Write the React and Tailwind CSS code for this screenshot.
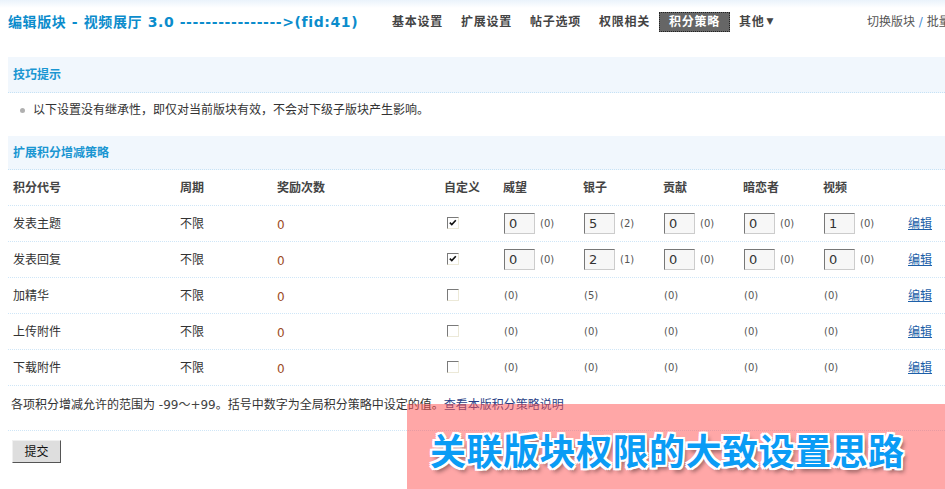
import React from 'react';

const NAV = ['基本设置', '扩展设置', '帖子选项', '权限相关', '积分策略', '其他'];

const ROWS = [
  { name: '发表主题', custom: true, vals: [['0', '0'], ['5', '2'], ['0', '0'], ['0', '0'], ['1', '0']] },
  { name: '发表回复', custom: true, vals: [['0', '0'], ['2', '1'], ['0', '0'], ['0', '0'], ['0', '0']] },
  { name: '加精华', custom: false, vals: [[null, '0'], [null, '5'], [null, '0'], [null, '0'], [null, '0']] },
  { name: '上传附件', custom: false, vals: [[null, '0'], [null, '0'], [null, '0'], [null, '0'], [null, '0']] },
  { name: '下载附件', custom: false, vals: [[null, '0'], [null, '0'], [null, '0'], [null, '0'], [null, '0']] },
];

const HEAD = ['积分代号', '周期', '奖励次数', '自定义', '威望', '银子', '贡献', '暗恋者', '视频', ''];

const GRID = 'grid grid-cols-[167px_97px_167px_59px_80px_80px_80px_80px_85px_1fr]';

function Check({ checked }) {
  return (
    <span className="relative block w-[12px] h-[12px] bg-white border border-t-[#7a7a7a] border-l-[#7a7a7a] border-b-[#ece9d8] border-r-[#ece9d8]">
      {checked && (
        <svg viewBox="0 0 10 10" className="absolute left-[1px] top-[1px] w-[8px] h-[8px]">
          <path d="M1 4.5 L3.5 7 L8.5 1.5" fill="none" stroke="#111" strokeWidth="2" />
        </svg>
      )}
    </span>
  );
}

function Cell({ val, base }) {
  if (val === null) {
    return <span className="pl-[1px] text-[10px] text-[#555]">({base})</span>;
  }
  return (
    <span className="flex items-center">
      <span className="ml-[1px] w-[31px] h-[21px] pl-[4px] flex items-center text-[13px] text-[#333] bg-[#f7f7f7] border border-t-[#777] border-l-[#777] border-b-[#ccc] border-r-[#ccc]">
        {val}
      </span>
      <span className="ml-[5px] text-[10px] text-[#555]">({base})</span>
    </span>
  );
}

export default function App() {
  return (
    <div className="relative w-[945px] h-[489px] overflow-hidden bg-white text-[12px] text-[#333] font-['DejaVu_Sans','Noto_Sans_CJK_SC',sans-serif]">
      {/* title bar */}
      <div className="h-[44px] flex items-center pl-[8px] bg-[linear-gradient(#eaf3fb,#ffffff_8px)]">
        <div className="w-[375px] shrink-0 whitespace-nowrap text-[14px] font-bold text-[#0b8ccc] tracking-[0.6px]">
          编辑版块 - 视频展厅 3.0 ---------------->(fid:41)
        </div>
        <div className="flex items-center">
          {NAV.map((n) => (
            <span
              key={n}
              className={`px-[9px] h-[20px] flex items-center text-[12px] font-bold tracking-[0.75px] whitespace-nowrap ${
                n === '积分策略' ? 'bg-[#666] text-white border border-dotted border-[#222]' : 'text-[#444]'
              }`}
            >
              {n}
              {n === '其他' && <span className="ml-[2px] text-[9px]">▼</span>}
            </span>
          ))}
        </div>
        <div className="ml-auto w-[78px] shrink-0 overflow-hidden whitespace-nowrap text-[12px] text-[#555]">
          切换版块 <span className="text-[#4a8fd6]">/</span> 批量编辑
        </div>
      </div>

      <div className="pl-[8px] mt-[13px]">
        {/* tips */}
        <div className="h-[36px] flex items-center pl-[5px] bg-[#f1f7fd] border-b border-dotted border-[#c6e2f5] text-[12px] font-bold text-[#1a96d2]">
          技巧提示
        </div>
        <div className="h-[43px] pt-[9px] flex items-start pl-[12px]">
          <span className="mt-[6px] w-[5px] h-[5px] rounded-full bg-[#b0b0b0]" />
          <span className="ml-[8px] leading-[16px] text-[#333]">
            以下设置没有继承性，即仅对当前版块有效，不会对下级子版块产生影响。
          </span>
        </div>

        <div className="h-[34px] flex items-center pl-[5px] bg-[#f1f7fd] border-b border-dotted border-[#c6e2f5] text-[12px] font-bold text-[#1a96d2]">
          扩展积分增减策略
        </div>

        {/* table */}
        <div className={`${GRID} h-[36px] items-center pl-[5px] border-b border-dotted border-[#cfe6f7] font-bold text-[#444]`}>
          {HEAD.map((h, i) => (
            <span key={i} className="whitespace-nowrap">{h}</span>
          ))}
        </div>
        {ROWS.map((r) => (
          <div key={r.name} className={`${GRID} h-[36px] items-center pl-[5px] border-b border-dotted border-[#cfe6f7]`}>
            <span>{r.name}</span>
            <span>不限</span>
            <span className="mt-[3px] text-[#9c4a24]">0</span>
            <span className="pl-[3px] -mt-[2px]">
              <Check checked={r.custom} />
            </span>
            {r.vals.map(([v, b], i) => (
              <Cell key={i} val={v} base={b} />
            ))}
            <a className="text-[#1d5fa8] underline">编辑</a>
          </div>
        ))}

        {/* footer */}
        <div className="h-[45px] pt-[11px] pl-[3px] border-b border-dotted border-[#cfe6f7] leading-[16px] whitespace-nowrap">
          各项积分增减允许的范围为 <span className="text-[#444]">-99～+99</span>。括号中数字为全局积分策略中设定的值。
          <a className="text-[#2a3f86]">查看本版积分策略说明</a>
        </div>
        <button className="mt-[9px] ml-[4px] w-[49px] h-[23px] bg-[#dedede] border border-t-[#f0f0f0] border-l-[#f0f0f0] border-b-[#555] border-r-[#555] text-[12px] text-[#111]">
          提交
        </button>
      </div>

      {/* overlay banner */}
      <div className="absolute left-[407px] top-[404px] right-0 bottom-0 bg-[rgba(255,80,80,0.5)] pl-[23px] pt-[25px]">
        <div className="leading-[40px] text-[36px] font-bold tracking-[0.5px] text-[#0a9cf5] whitespace-nowrap font-['Noto_Sans_CJK_SC',sans-serif] [text-shadow:-2px_-2px_0_#fff,2px_-2px_0_#fff,-2px_2px_0_#fff,2px_2px_0_#fff,0_-2px_0_#fff,0_2px_0_#fff,-2px_0_0_#fff,2px_0_0_#fff,3px_4px_4px_rgba(0,0,0,0.45)]">
          关联版块权限的大致设置思路
        </div>
      </div>
    </div>
  );
}
